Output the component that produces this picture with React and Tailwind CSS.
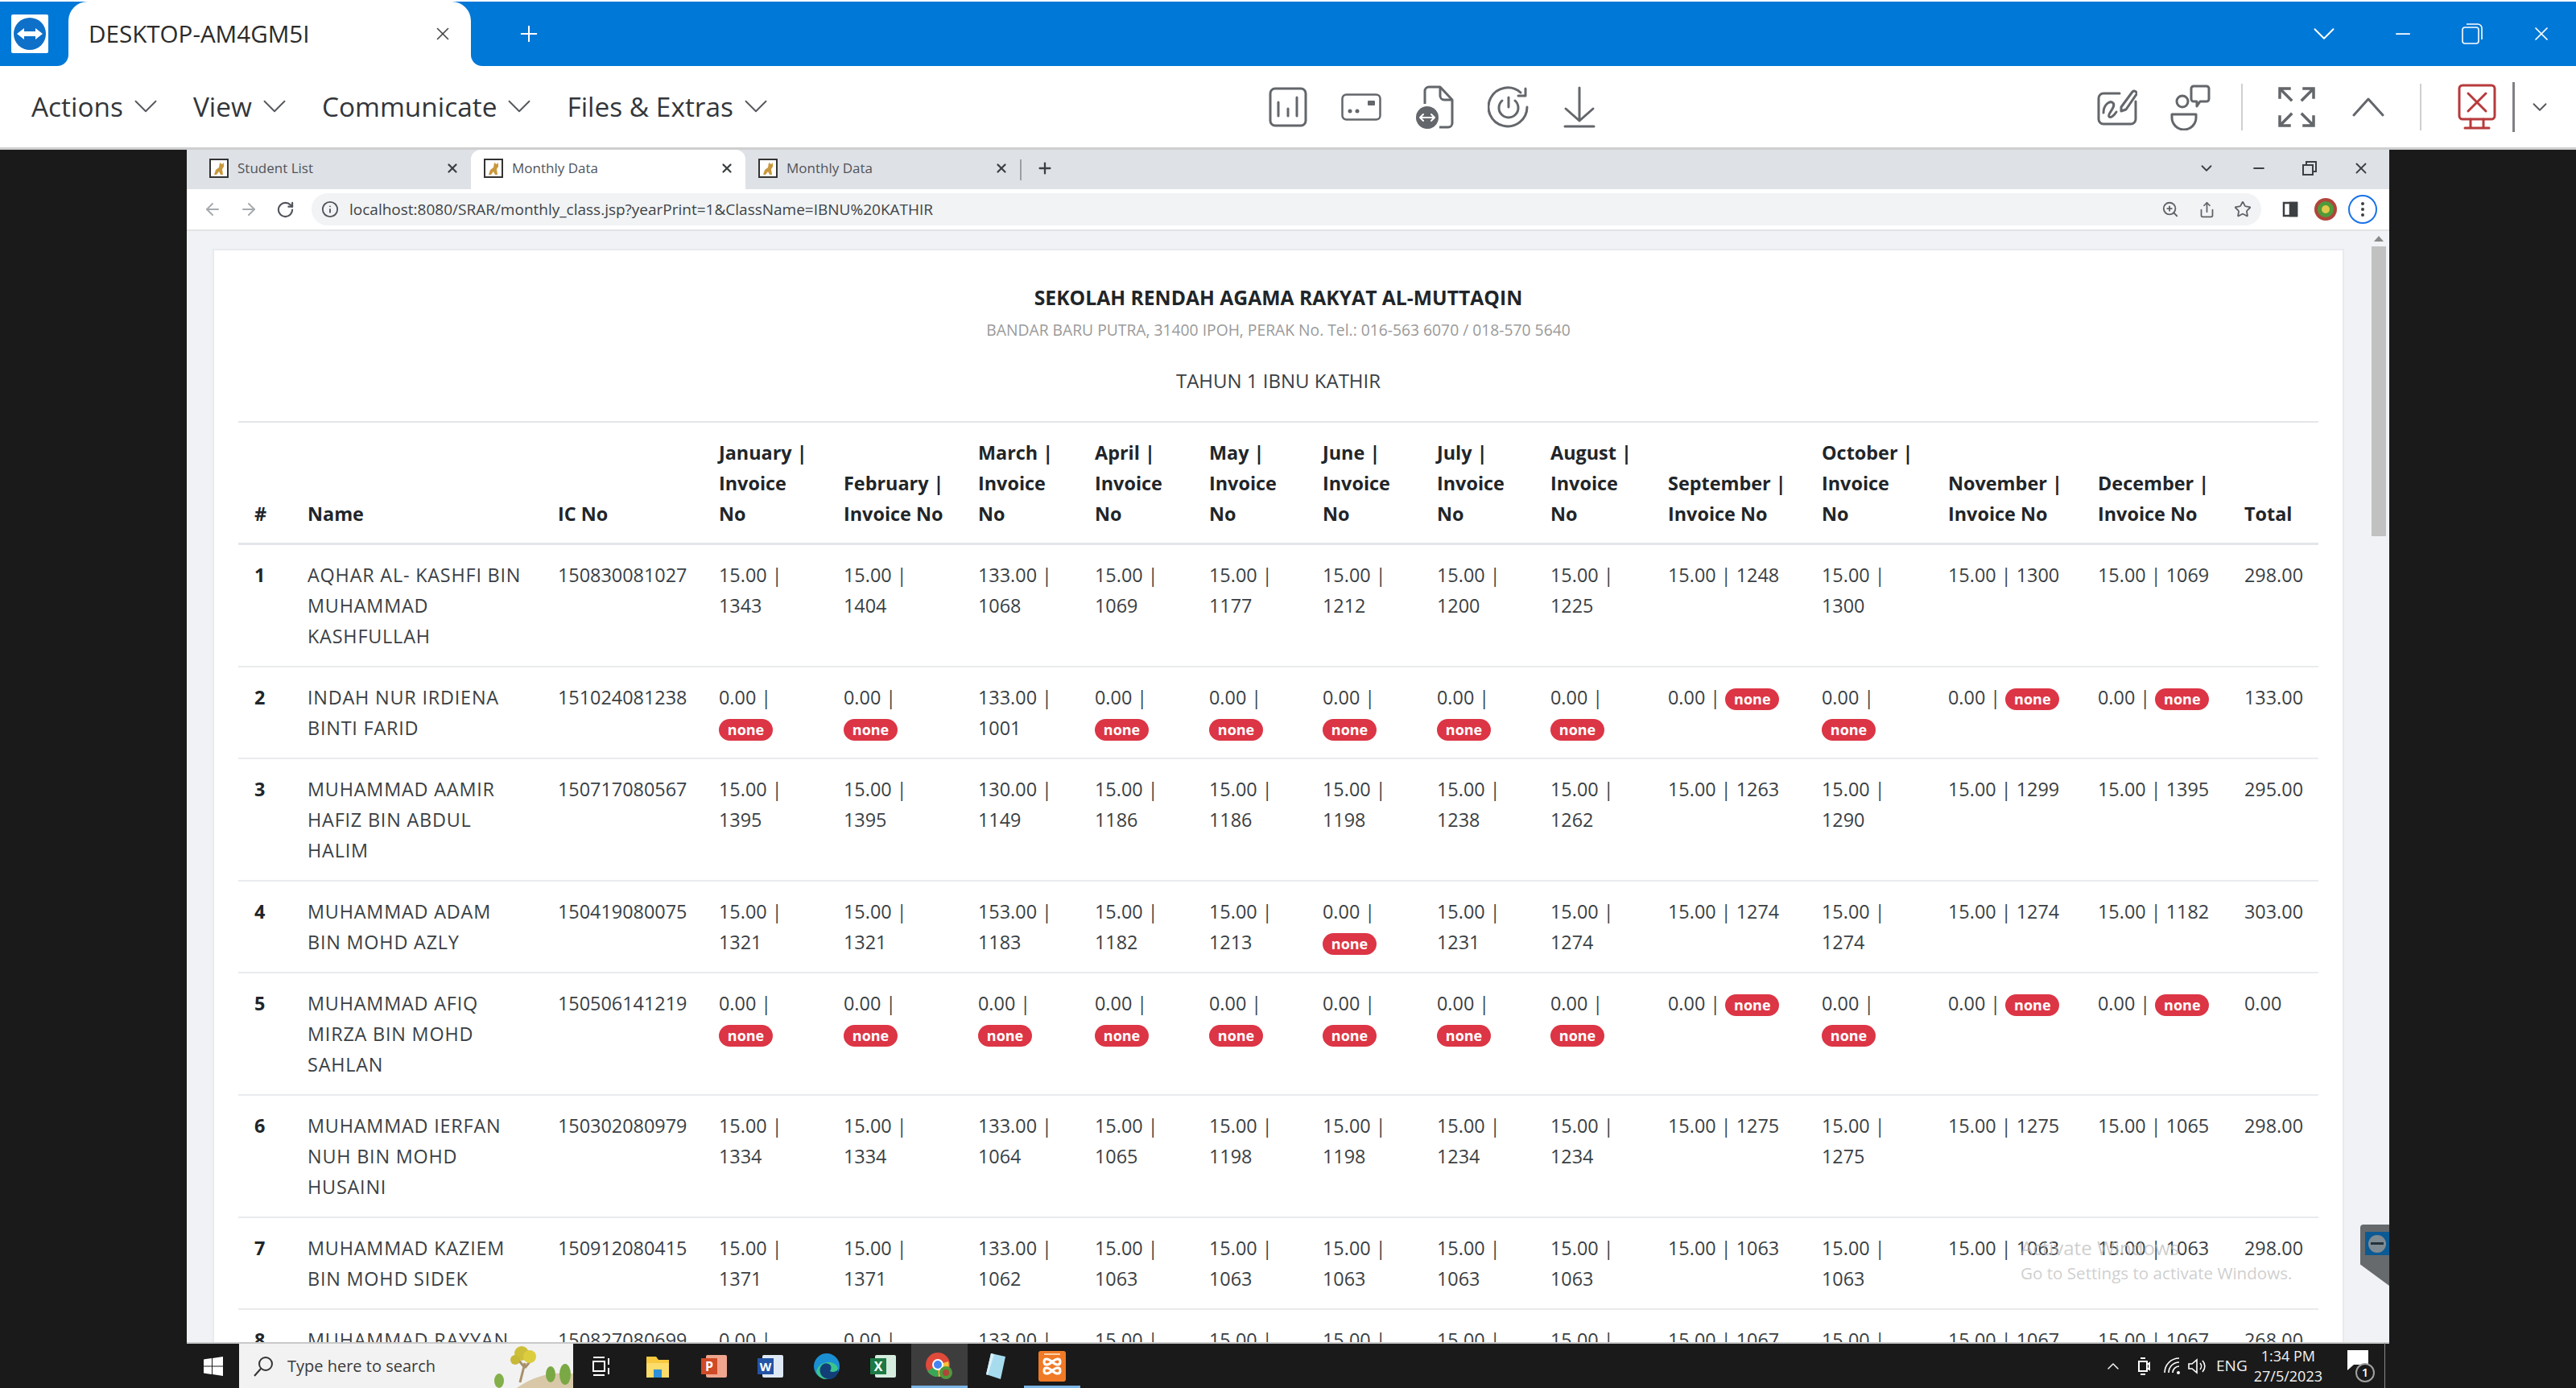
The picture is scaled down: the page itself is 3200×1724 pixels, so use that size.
import React from "react";
import {
  ArrowLeft,
  ArrowRight,
  ChevronDown,
  ChevronUp,
  Info,
  Minus,
  Plus,
  RotateCw,
  Share,
  Star,
  X,
  ZoomIn,
} from "lucide-react";

const colWidths = [66, 311, 200, 155, 167, 145, 142, 141, 142, 141, 146, 191, 157, 186, 182, 112];

const headers = [
  "#",
  "Name",
  "IC No",
  "January | Invoice No",
  "February | Invoice No",
  "March | Invoice No",
  "April | Invoice No",
  "May | Invoice No",
  "June | Invoice No",
  "July | Invoice No",
  "August | Invoice No",
  "September | Invoice No",
  "October | Invoice No",
  "November | Invoice No",
  "December | Invoice No",
  "Total",
];

// month cells are [amount, invoice], no invoice means the red "none" pill
const zero = ["0.00", null];
const rows = [
  {
    no: 1,
    name: ["AQHAR AL- KASHFI BIN", "MUHAMMAD", "KASHFULLAH"],
    ic: "150830081027",
    months: [["15.00", 1343], ["15.00", 1404], ["133.00", 1068], ["15.00", 1069], ["15.00", 1177], ["15.00", 1212], ["15.00", 1200], ["15.00", 1225], ["15.00", 1248], ["15.00", 1300], ["15.00", 1300], ["15.00", 1069]],
    total: "298.00",
  },
  {
    no: 2,
    name: ["INDAH NUR IRDIENA", "BINTI FARID"],
    ic: "151024081238",
    months: [zero, zero, ["133.00", 1001], zero, zero, zero, zero, zero, zero, zero, zero, zero],
    total: "133.00",
  },
  {
    no: 3,
    name: ["MUHAMMAD AAMIR", "HAFIZ BIN ABDUL", "HALIM"],
    ic: "150717080567",
    months: [["15.00", 1395], ["15.00", 1395], ["130.00", 1149], ["15.00", 1186], ["15.00", 1186], ["15.00", 1198], ["15.00", 1238], ["15.00", 1262], ["15.00", 1263], ["15.00", 1290], ["15.00", 1299], ["15.00", 1395]],
    total: "295.00",
  },
  {
    no: 4,
    name: ["MUHAMMAD ADAM", "BIN MOHD AZLY"],
    ic: "150419080075",
    months: [["15.00", 1321], ["15.00", 1321], ["153.00", 1183], ["15.00", 1182], ["15.00", 1213], zero, ["15.00", 1231], ["15.00", 1274], ["15.00", 1274], ["15.00", 1274], ["15.00", 1274], ["15.00", 1182]],
    total: "303.00",
  },
  {
    no: 5,
    name: ["MUHAMMAD AFIQ", "MIRZA BIN MOHD", "SAHLAN"],
    ic: "150506141219",
    months: [zero, zero, zero, zero, zero, zero, zero, zero, zero, zero, zero, zero],
    total: "0.00",
  },
  {
    no: 6,
    name: ["MUHAMMAD IERFAN", "NUH BIN MOHD", "HUSAINI"],
    ic: "150302080979",
    months: [["15.00", 1334], ["15.00", 1334], ["133.00", 1064], ["15.00", 1065], ["15.00", 1198], ["15.00", 1198], ["15.00", 1234], ["15.00", 1234], ["15.00", 1275], ["15.00", 1275], ["15.00", 1275], ["15.00", 1065]],
    total: "298.00",
  },
  {
    no: 7,
    name: ["MUHAMMAD KAZIEM", "BIN MOHD SIDEK"],
    ic: "150912080415",
    months: [["15.00", 1371], ["15.00", 1371], ["133.00", 1062], ["15.00", 1063], ["15.00", 1063], ["15.00", 1063], ["15.00", 1063], ["15.00", 1063], ["15.00", 1063], ["15.00", 1063], ["15.00", 1063], ["15.00", 1063]],
    total: "298.00",
  },
  {
    no: 8,
    name: ["MUHAMMAD RAYYAN", "BIN MOHD"],
    ic: "150827080699",
    months: [zero, zero, ["133.00", 1066], ["15.00", 1067], ["15.00", 1067], ["15.00", 1067], ["15.00", 1067], ["15.00", 1067], ["15.00", 1067], ["15.00", 1067], ["15.00", 1067], ["15.00", 1067]],
    total: "268.00",
  },
];

function TvLogo({ className }) {
  return (
    <svg className={className} viewBox="0 0 46 48">
      <rect width="46" height="48" rx="2" fill="#fff" />
      <circle cx="23" cy="24" r="20" fill="#0e70c8" />
      <path d="M7 24l9-7v4h14v-4l9 7-9 7v-4H16v4z" fill="#fff" />
    </svg>
  );
}

function ChartIcon() {
  return (
    <svg width="48" height="50" viewBox="0 0 48 50" fill="none" stroke="#63666a" strokeWidth="3" strokeLinecap="round">
      <rect x="2" y="2" width="44" height="46" rx="6" />
      <path d="M12 19v17M24 27v9M35 13v23" />
    </svg>
  );
}

function CardIcon() {
  return (
    <svg width="50" height="34" viewBox="0 0 50 34" fill="none" stroke="#63666a" strokeWidth="2.5">
      <rect x="1.5" y="1.5" width="47" height="31" rx="5" />
      <circle cx="11" cy="22" r="2.5" fill="#63666a" stroke="none" />
      <circle cx="20" cy="22" r="2.5" fill="#63666a" stroke="none" />
      <rect x="33" y="9" width="9" height="6" rx="1" fill="#63666a" stroke="none" />
    </svg>
  );
}

function FileTransferIcon() {
  return (
    <svg width="48" height="56" viewBox="0 0 48 56" fill="none" stroke="#63666a" strokeWidth="3" strokeLinejoin="round">
      <path d="M12 24V8a5 5 0 0 1 5-5h14l15 16v29a5 5 0 0 1-5 5H30" />
      <path d="M31 3v11a5 5 0 0 0 5 5h10" />
      <circle cx="15" cy="41" r="14" fill="#63666a" stroke="none" />
      <path d="M6 41h18M10 37l-4 4 4 4M20 37l4 4-4 4" stroke="#fff" strokeWidth="2" strokeLinecap="round" />
    </svg>
  );
}

function PowerResetIcon() {
  return (
    <svg width="52" height="54" viewBox="0 0 52 54" fill="none" stroke="#63666a" strokeWidth="3" strokeLinecap="round" strokeLinejoin="round">
      <path d="M49 27a24 24 0 1 1-8-18" />
      <path d="M47 4v9H38" />
      <path d="M18 19a12 12 0 1 0 16 0" />
      <path d="M26 15v12" />
    </svg>
  );
}

function DownloadIcon() {
  return (
    <svg width="40" height="52" viewBox="0 0 40 52" fill="none" stroke="#63666a" strokeWidth="3" strokeLinecap="round" strokeLinejoin="round">
      <path d="M20 2v41M3 28l17 15 17-15M2 50h36" />
    </svg>
  );
}

function WhiteboardIcon() {
  return (
    <svg width="50" height="46" viewBox="0 0 50 46" fill="none" stroke="#63666a" strokeWidth="3" strokeLinecap="round" strokeLinejoin="round">
      <path d="M28 6H8a6 6 0 0 0-6 6v26a6 6 0 0 0 6 6h34a6 6 0 0 0 6-6V16" />
      <path d="M8 30c0-10 8-16 12-12 4 5-8 14-5 17 3 2 7-3 9-6" />
      <path d="M30 23l14-19a3 3 0 0 1 5 3L36 26l-6 2z" />
    </svg>
  );
}

function MeetingIcon() {
  return (
    <svg width="50" height="58" viewBox="0 0 50 58" fill="none" stroke="#63666a" strokeWidth="3" strokeLinecap="round" strokeLinejoin="round">
      <circle cx="15" cy="22" r="7" />
      <path d="M2 38h30v4a15 15 0 0 1-30 0z" />
      <path d="M29 3h16a3 3 0 0 1 3 3v13a3 3 0 0 1-3 3h-8l-4 6v-6h-4a3 3 0 0 1-3-3V6a3 3 0 0 1 3-3z" />
    </svg>
  );
}

function FullscreenIcon() {
  return (
    <svg width="46" height="52" viewBox="0 0 46 52" fill="none" stroke="#63666a" strokeWidth="3.5" strokeLinecap="square">
      <path d="M2 14V3h12M3 4l13 13M44 14V3H32M43 4L30 17M2 38v11h12M3 48l13-13M44 38v11H32M43 48L30 35" />
    </svg>
  );
}

function DisconnectIcon() {
  return (
    <svg width="48" height="58" viewBox="0 0 48 58" fill="none" stroke="#b83a3c" strokeWidth="3" strokeLinecap="round">
      <rect x="2" y="2" width="44" height="42" rx="4" />
      <path d="M13 12l22 22M35 12L13 34M16 44v11M32 44v11M9 55h30" />
    </svg>
  );
}

function Favicon() {
  return (
    <svg width="24" height="24" viewBox="0 0 24 24">
      <rect x="1" y="1" width="22" height="22" fill="#fff" stroke="#333" strokeWidth="2" />
      <path d="M6 20l2-6 4-3 1-6 3 2 2-2v5l-2 3 1 7h-3l-2-4-3 4z" fill="#c9983d" />
    </svg>
  );
}

function BrowserTab({ title, active }) {
  return (
    <div className={`w-[341px] h-full flex items-center pl-[16px] pr-[14px] pb-[3px] rounded-t-[12px] ${active ? "bg-white" : ""}`}>
      <Favicon />
      <span className="ml-[11px] flex-1 text-[17px] text-[#50545a]">{title}</span>
      <X size={18} strokeWidth={3} className="text-[#3c4043]" />
    </div>
  );
}

function MenuItem({ label, first }) {
  return (
    <>
      <span className={first ? "" : "ml-[34px]"}>{label}</span>
      <ChevronDown size={50} strokeWidth={0.9} className="ml-[3px] text-[#55585c]" />
    </>
  );
}

function TaskbarIcon({ children, active, underline }) {
  return (
    <div className={`w-[70px] h-full flex items-center justify-center relative ${active ? "bg-[#3d3d3d]" : ""}`}>
      {children}
      {underline && <div className="absolute bottom-0 inset-x-0 h-[3px] bg-[#7ab4e4]" />}
    </div>
  );
}

function MonthCell({ cell }) {
  return (
    <td className="px-[20px] py-[18px] align-top">
      {cell[0]} |{" "}
      {cell[1] ? (
        cell[1]
      ) : (
        <span className="inline-block rounded-full bg-[#dc3545] px-[10.8px] py-[4.5px] text-[18px] leading-[18px] font-bold text-white">
          none
        </span>
      )}
    </td>
  );
}

export default function App() {
  return (
    <div className="w-[3200px] h-[1724px] flex flex-col overflow-hidden bg-[#1a1a1a] font-['Open_Sans',sans-serif]">
      {/* TeamViewer title bar */}
      <div className="h-[82px] shrink-0 border-t-2 border-white bg-[#0078d7] flex items-stretch">
        <div className="w-[85px] flex items-center pl-[14px]">
          <TvLogo className="w-[46px] h-[48px]" />
        </div>
        <div className="relative w-[500px] bg-white rounded-t-[24px] flex items-center pl-[25px] pr-[22px]">
          <div className="absolute -left-[14px] bottom-0 w-[14px] h-[14px] bg-white">
            <div className="w-full h-full bg-[#0078d7] rounded-br-[14px]" />
          </div>
          <div className="absolute -right-[14px] bottom-0 w-[14px] h-[14px] bg-white">
            <div className="w-full h-full bg-[#0078d7] rounded-bl-[14px]" />
          </div>
          <span className="flex-1 text-[29.6px] text-[#2b2b2b]">DESKTOP-AM4GM5I</span>
          <X size={26} strokeWidth={1.5} className="text-[#444]" />
        </div>
        <div className="ml-[56px] flex items-center">
          <Plus size={32} strokeWidth={1.5} className="text-white" />
        </div>
        <div className="flex-1" />
        <div className="flex items-center pr-[29px] text-white">
          <ChevronDown size={46} strokeWidth={1} />
          <Minus size={28} strokeWidth={1.5} className="ml-[61px]" />
          <svg className="ml-[58px]" width="28" height="28" viewBox="0 0 28 28" fill="none" stroke="#fff" strokeWidth="1.6">
            <rect x="2" y="6" width="20" height="20" rx="3" />
            <path d="M7 2h14a5 5 0 0 1 5 5v14" />
          </svg>
          <X size={28} strokeWidth={1.5} className="ml-[58px]" />
        </div>
      </div>

      {/* TeamViewer toolbar */}
      <div className="h-[101px] shrink-0 bg-white flex items-center">
        <div className="w-[1576px] shrink-0 flex items-center pl-[39px] text-[33.4px] text-[#33363a]">
          <MenuItem label="Actions" first />
          <MenuItem label="View" />
          <MenuItem label="Communicate" />
          <MenuItem label="Files & Extras" />
        </div>
        <div className="flex items-center gap-[42px]">
          <ChartIcon />
          <CardIcon />
          <FileTransferIcon />
          <PowerResetIcon />
          <DownloadIcon />
        </div>
        <div className="flex-1" />
        <div className="flex items-center pr-[30px]">
          <WhiteboardIcon />
          <div className="ml-[41px]">
            <MeetingIcon />
          </div>
          <div className="ml-[38px] w-[2px] h-[58px] bg-[#cfcfcf]" />
          <div className="ml-[44px]">
            <FullscreenIcon />
          </div>
          <svg className="ml-[46px]" width="40" height="26" viewBox="0 0 40 26" fill="none" stroke="#63666a" strokeWidth="3" strokeLinecap="round" strokeLinejoin="round">
            <path d="M2 23L20 3l18 20" />
          </svg>
          <div className="ml-[44px] w-[2px] h-[58px] bg-[#cfcfcf]" />
          <div className="ml-[45px]">
            <DisconnectIcon />
          </div>
          <div className="ml-[20px] w-[3px] h-[62px] bg-[#808085]" />
          <ChevronDown size={30} strokeWidth={1.5} className="ml-[16px] text-[#55585c]" />
        </div>
      </div>
      <div className="h-[3px] shrink-0 bg-[#cfcfcf]" />

      {/* remote desktop */}
      <div className="flex-1 min-h-0 mx-[232px] relative flex flex-col overflow-hidden">
        {/* chrome tab strip */}
        <div className="h-[49px] shrink-0 bg-[#dee1e6] flex items-stretch pl-[12px]">
          <BrowserTab title="Student List" />
          <BrowserTab title="Monthly Data" active />
          <BrowserTab title="Monthly Data" />
          <div className="w-[2px] h-[26px] self-center bg-[#9aa0a6]" />
          <div className="self-center ml-[18px] pb-[3px]">
            <Plus size={22} strokeWidth={2.5} className="text-[#3c4043]" />
          </div>
          <div className="flex-1" />
          <div className="self-center flex items-center gap-[44px] pr-[24px] pb-[4px] text-[#3c4043]">
            <ChevronDown size={22} strokeWidth={2} />
            <Minus size={20} strokeWidth={2.5} />
            <svg width="18" height="18" viewBox="0 0 18 18" fill="none" stroke="#3c4043" strokeWidth="2">
              <rect x="1" y="5" width="12" height="12" />
              <path d="M5 5V1h12v12h-4" />
            </svg>
            <X size={22} strokeWidth={2} />
          </div>
        </div>

        {/* chrome address bar */}
        <div className="h-[52px] shrink-0 bg-white flex items-center border-b-2 border-[#e3e4e6] pl-[20px]">
          <ArrowLeft size={24} strokeWidth={2} className="text-[#a7abb0]" />
          <ArrowRight size={24} strokeWidth={2} className="ml-[21px] text-[#a7abb0]" />
          <RotateCw size={23} strokeWidth={2.2} className="ml-[22px] text-[#50545a]" />
          <div className="ml-[21px] w-[2422px] h-[40px] rounded-full bg-[#f1f3f4] flex items-center pl-[12px] pr-[12px]">
            <Info size={22} strokeWidth={2} className="text-[#50545a]" />
            <span className="ml-[13px] flex-1 text-[19px] text-[#3f4347]">
              localhost:8080/SRAR/monthly_class.jsp?yearPrint=1&amp;ClassName=IBNU%20KATHIR
            </span>
            <ZoomIn size={22} strokeWidth={2} className="text-[#5f6368]" />
            <Share size={21} strokeWidth={2} className="ml-[24px] text-[#5f6368]" />
            <Star size={22} strokeWidth={2} className="ml-[23px] text-[#5f6368]" />
          </div>
          <svg className="ml-[26px]" width="20" height="20" viewBox="0 0 20 20" fill="none" stroke="#3c4043" strokeWidth="2.5">
            <rect x="2" y="2" width="16" height="16" />
            <rect x="10" y="2" width="8" height="16" fill="#3c4043" />
          </svg>
          <svg className="ml-[20px]" width="28" height="28" viewBox="0 0 28 28">
            <circle cx="14" cy="14" r="14" fill="#b0453a" />
            <circle cx="14" cy="14" r="10" fill="#4f9a3b" />
            <circle cx="14" cy="14" r="5" fill="#e3c84a" />
          </svg>
          <div className="ml-[14px] w-[36px] h-[36px] rounded-full border-2 border-[#1a73e8] flex flex-col items-center justify-center gap-[3px]">
            <div className="w-[4px] h-[4px] rounded-full bg-[#3c4043]" />
            <div className="w-[4px] h-[4px] rounded-full bg-[#3c4043]" />
            <div className="w-[4px] h-[4px] rounded-full bg-[#3c4043]" />
          </div>
        </div>

        {/* page */}
        <div className="flex-1 min-h-0 bg-[#f0f2f5] flex overflow-hidden">
          <div className="w-[2680px] shrink-0 pl-[32px] pt-[22px]">
            <div className="w-[2648px] bg-white border-t-2 border-l-2 border-r-2 border-[#e8eaed] px-[30px] pt-[40px]">
              <div className="flex flex-col items-center">
                <div className="text-[24.7px] leading-[38px] font-bold text-[#212529]">
                  SEKOLAH RENDAH AGAMA RAKYAT AL-MUTTAQIN
                </div>
                <div className="mt-[6px] text-[19.3px] leading-[30px] text-[#9a9a9a]">
                  BANDAR BARU PUTRA, 31400 IPOH, PERAK No. Tel.: 016-563 6070 / 018-570 5640
                </div>
                <div className="mt-[29px] mb-[31px] text-[24px] leading-[38px] text-[#3a3f44]">TAHUN 1 IBNU KATHIR</div>
              </div>
              <table className="w-[2584px] table-fixed border-collapse text-[23.4px] leading-[38px] text-[#3a3f44]">
                <colgroup>
                  {colWidths.map((w, i) => (
                    <col key={i} style={{ width: w }} />
                  ))}
                </colgroup>
                <thead>
                  <tr className="border-t-2 border-b-[3px] border-[#e4e6e9]">
                    {headers.map((h) => (
                      <th key={h} className="px-[20px] py-[17.5px] align-bottom text-left font-bold text-[#212529]">
                        {h}
                      </th>
                    ))}
                  </tr>
                </thead>
                <tbody>
                  {rows.map((r) => (
                    <tr key={r.no} className="border-b-2 border-[#e9ebee]">
                      <td className="px-[20px] py-[18px] align-top font-bold text-[#212529]">{r.no}</td>
                      <td className="pl-[20px] py-[18px] align-top whitespace-nowrap tracking-[0.8px]">
                        {r.name.map((line) => (
                          <div key={line}>{line}</div>
                        ))}
                      </td>
                      <td className="px-[20px] py-[18px] align-top">{r.ic}</td>
                      {r.months.map((m, i) => (
                        <MonthCell key={i} cell={m} />
                      ))}
                      <td className="px-[20px] py-[18px] align-top">{r.total}</td>
                    </tr>
                  ))}
                </tbody>
              </table>
            </div>
          </div>
          {/* scrollbar */}
          <div className="flex-1 flex flex-col items-center pt-[6px] pl-[30px]">
            <div className="w-0 h-0 border-x-[6px] border-x-transparent border-b-[7px] border-b-[#8a8a8a]" />
            <div className="mt-[6px] w-[18px] h-[360px] bg-[#c1c1c1]" />
          </div>
        </div>

        {/* windows taskbar */}
        <div className="h-[57px] shrink-0 bg-[#1a1a1a] border-t-2 border-[#c9c9c9] flex items-center">
          <div className="w-[65px] flex justify-center">
            <svg width="24" height="24" viewBox="0 0 24 24" fill="#fff">
              <path d="M0 3.5l10-1.4v9.4H0zM11 2l13-2v11.5H11zM0 12.5h10v9.4L0 20.5zM11 12.5h13V24l-13-2z" />
            </svg>
          </div>
          <div className="relative w-[415px] h-full bg-[#f2f2f2] flex items-center pl-[16px] overflow-hidden">
            <svg width="28" height="28" viewBox="0 0 28 28" fill="none" stroke="#333" strokeWidth="2">
              <circle cx="17" cy="11" r="8" />
              <path d="M11 17l-8 9" />
            </svg>
            <span className="ml-[16px] text-[20px] text-[#3a3a3a]">Type here to search</span>
            <svg className="absolute right-0 bottom-0" width="100" height="55" viewBox="0 0 100 55">
              <path d="M30 55q30-22 70-18v18z" fill="#d8c8a8" />
              <path d="M34 48l6-24M40 30l-8-10M40 30l8-10" stroke="#a8906a" strokeWidth="3" fill="none" />
              <circle cx="36" cy="12" r="9" fill="#cdbf3a" />
              <circle cx="46" cy="16" r="8" fill="#dccd3e" />
              <circle cx="28" cy="20" r="6" fill="#c7b836" />
              <ellipse cx="8" cy="46" rx="6" ry="9" fill="#84b04a" />
              <ellipse cx="72" cy="38" rx="6" ry="10" fill="#7aa844" />
              <ellipse cx="90" cy="38" rx="7" ry="13" fill="#7aa844" />
            </svg>
          </div>
          <TaskbarIcon>
            <svg width="24" height="28" viewBox="0 0 24 28" fill="none" stroke="#fff" strokeWidth="2">
              <rect x="2" y="8" width="14" height="12" />
              <path d="M2 3h14M2 25h14M21 4v8M21 16v8" />
            </svg>
          </TaskbarIcon>
          <TaskbarIcon>
            <svg width="32" height="32" viewBox="0 0 32 32">
              <path d="M2 4h12l3 4h13v22H2z" fill="#f8c93e" />
              <path d="M2 12h28v18H2z" fill="#fcdc6a" />
              <rect x="11" y="20" width="10" height="10" fill="#2f8fd8" />
            </svg>
          </TaskbarIcon>
          <TaskbarIcon>
            <svg width="32" height="32" viewBox="0 0 32 32">
              <rect x="6" y="2" width="26" height="28" rx="2" fill="#f0a58f" />
              <rect x="0" y="6" width="20" height="20" fill="#cf4a26" />
              <text x="10" y="22" textAnchor="middle" fontSize="16" fontWeight="700" fill="#fff" fontFamily="Open Sans">P</text>
            </svg>
          </TaskbarIcon>
          <TaskbarIcon>
            <svg width="32" height="32" viewBox="0 0 32 32">
              <rect x="6" y="2" width="26" height="28" rx="2" fill="#dfe8f5" />
              <rect x="0" y="6" width="20" height="20" fill="#2354a5" />
              <text x="10" y="22" textAnchor="middle" fontSize="15" fontWeight="700" fill="#fff" fontFamily="Open Sans">W</text>
            </svg>
          </TaskbarIcon>
          <TaskbarIcon>
            <svg width="34" height="34" viewBox="0 0 34 34">
              <circle cx="17" cy="17" r="16" fill="#1b8fd4" />
              <path d="M4 24C6 10 28 8 31 20c0 4-8 5-10 3 6-9-8-14-12-4-2 6 4 13 12 13C12 35 6 30 4 24z" fill="#3bc48c" />
              <path d="M9 19c4-10 18-5 12 4 2 2 10 1 10-3 1 8-5 13-10 13-9 0-14-7-12-14z" fill="#123f78" />
            </svg>
          </TaskbarIcon>
          <TaskbarIcon>
            <svg width="32" height="32" viewBox="0 0 32 32">
              <rect x="6" y="2" width="26" height="28" rx="2" fill="#d6ecdf" />
              <rect x="0" y="6" width="20" height="20" fill="#1d7a45" />
              <text x="10" y="22" textAnchor="middle" fontSize="16" fontWeight="700" fill="#fff" fontFamily="Open Sans">X</text>
            </svg>
          </TaskbarIcon>
          <TaskbarIcon active underline>
            <svg width="36" height="36" viewBox="0 0 36 36">
              <circle cx="16" cy="16" r="15" fill="#e04a3a" />
              <path d="M16 16L3 24a15 15 0 0 0 14 7z" fill="#3aa757" />
              <path d="M16 16l13-4a15 15 0 0 1-12 19z" fill="#f6c33b" />
              <circle cx="16" cy="16" r="6" fill="#4285f4" stroke="#fff" strokeWidth="2" />
              <circle cx="26" cy="26" r="8" fill="#4f9a3b" />
              <circle cx="26" cy="26" r="4" fill="#b0453a" />
            </svg>
          </TaskbarIcon>
          <TaskbarIcon>
            <svg width="32" height="36" viewBox="0 0 32 36">
              <path d="M10 2l18 4-6 28-18-6z" fill="#a7dcef" />
              <path d="M10 2l4 1-8 26-2-1z" fill="#d8f0f8" />
            </svg>
          </TaskbarIcon>
          <TaskbarIcon underline>
            <svg width="34" height="38" viewBox="0 0 34 38">
              <rect width="34" height="38" rx="3" fill="#f07a26" />
              <path d="M7 4h20" stroke="#fbd0a8" strokeWidth="2" />
              <path d="M10 10c6 0 8 7 14 7 4 0 4-7 0-7-6 0-8 7-14 7-4 0-4-7 0-7zM10 21c6 0 8 7 14 7 4 0 4-7 0-7-6 0-8 7-14 7-4 0-4-7 0-7z" fill="none" stroke="#fff" strokeWidth="3" />
            </svg>
          </TaskbarIcon>
          <div className="flex-1" />
          <div className="flex items-center text-[#f2f2f2]">
            <ChevronUp size={24} strokeWidth={1.5} />
            <svg className="ml-[18px]" width="16" height="24" viewBox="0 0 16 24" fill="none" stroke="#fff" strokeWidth="2">
              <rect x="2" y="6" width="10" height="12" />
              <path d="M12 10l3-2v8l-3-2M4 2h6M4 22h6" />
            </svg>
            <svg className="ml-[16px]" width="24" height="24" viewBox="0 0 24 24" fill="none" stroke="#fff" strokeWidth="1.6">
              <path d="M2 20A18 18 0 0 1 20 2M7 20A13 13 0 0 1 20 7M12 20a8 8 0 0 1 8-8" />
              <circle cx="19" cy="20" r="2" fill="#fff" stroke="none" />
            </svg>
            <svg className="ml-[6px]" width="26" height="24" viewBox="0 0 26 24" fill="none" stroke="#fff" strokeWidth="1.6">
              <path d="M2 9h4l6-5v16l-6-5H2zM16 8a6 6 0 0 1 0 8M19 5a10 10 0 0 1 0 14" />
            </svg>
            <span className="ml-[10px] text-[19px]">ENG</span>
            <div className="ml-[8px] flex flex-col items-center text-[18px] leading-[25px]">
              <span>1:34 PM</span>
              <span>27/5/2023</span>
            </div>
            <div className="relative ml-[31px] w-[34px] h-[40px]">
              <svg width="26" height="26" viewBox="0 0 26 26" fill="#fff">
                <path d="M0 0h26v18H8l-8 7z" />
              </svg>
              <div className="absolute right-0 bottom-0 w-[24px] h-[24px] rounded-full bg-[#1a1a1a] border-2 border-[#a0a0a0] flex items-center justify-center text-[15px] font-semibold text-white">
                1
              </div>
            </div>
            <div className="ml-[12px] w-[1px] h-[57px] bg-[#888]" />
            <div className="w-[5px]" />
          </div>
        </div>

        {/* overlays */}
        <div className="absolute left-[2278px] top-[1349px] text-[24px] leading-[30px] text-[#b9b9b9]/70 pointer-events-none">
          <div>Activate Windows</div>
          <div className="text-[20.6px] leading-[32px]">Go to Settings to activate Windows.</div>
        </div>
        <div className="absolute right-0 top-[1335px] w-[36px] h-[76px] bg-[#666a6c] rounded-tl-[4px] [clip-path:polygon(0_0,100%_0,100%_100%,0_65%)] pl-[6px] pt-[9px]">
          <div className="w-[30px] h-[29px] bg-[#0b5a94] flex items-center justify-center">
            <div className="w-[22px] h-[22px] rounded-full bg-[#7f8b92] flex items-center justify-center">
              <div className="w-[16px] h-[3px] bg-[#23323c]" />
            </div>
          </div>
        </div>
      </div>
    </div>
  );
}
